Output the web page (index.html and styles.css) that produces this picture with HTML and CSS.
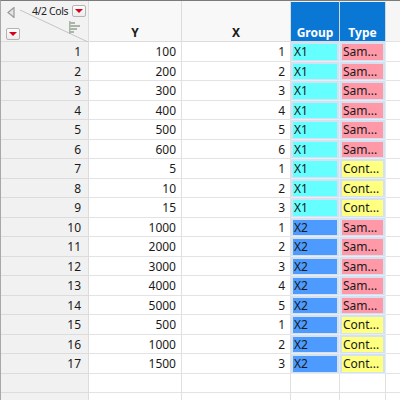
FILE: index.html
```html
<!DOCTYPE html>
<html>
<head>
<meta charset="utf-8">
<link rel="stylesheet" href="styles.css">
</head>
<body>
<div class="sheet">
  <div class="corner">
    <svg class="diag" width="88" height="41" viewBox="0 0 88 41"><line x1="20" y1="9" x2="88" y2="41" stroke="#c4c4c4" stroke-width="1"/></svg>
    <svg class="back" width="8" height="11" viewBox="0 0 8 11"><polygon points="7,0.5 7,10.5 1,5.5" fill="#e4e4e4" stroke="#9a9a9a" stroke-width="1.2"/></svg>
    <span class="cols">4/2 Cols</span>
    <span class="btn btn-top"><i class="tri"></i></span>
    <span class="btn btn-bot"><i class="tri"></i></span>
    <svg class="sorticon" width="12" height="13" viewBox="0 0 12 13">
      <rect x="0" y="0" width="1.5" height="13" fill="#a9b5a6"/>
      <rect x="1" y="1" width="5" height="2" fill="#a9b5a6"/>
      <rect x="1" y="4" width="10" height="2" fill="#a9b5a6"/>
      <rect x="1" y="7" width="7" height="2" fill="#a9b5a6"/>
      <rect x="1" y="10" width="4" height="2" fill="#a9b5a6"/>
    </svg>
  </div>
  <div class="hd">Y</div>
  <div class="hd">X</div>
  <div class="hd sel">Group</div>
  <div class="hd sel">Type</div>
  <div class="hd rest"></div>

  <div class="rh">1</div><div class="num">100</div><div class="num">1</div><div class="sc"><span class="x1">X1</span></div><div class="sc"><span class="sam">Sam...</span></div><div class="rest"></div>
  <div class="rh">2</div><div class="num">200</div><div class="num">2</div><div class="sc"><span class="x1">X1</span></div><div class="sc"><span class="sam">Sam...</span></div><div class="rest"></div>
  <div class="rh">3</div><div class="num">300</div><div class="num">3</div><div class="sc"><span class="x1">X1</span></div><div class="sc"><span class="sam">Sam...</span></div><div class="rest"></div>
  <div class="rh">4</div><div class="num">400</div><div class="num">4</div><div class="sc"><span class="x1">X1</span></div><div class="sc"><span class="sam">Sam...</span></div><div class="rest"></div>
  <div class="rh">5</div><div class="num">500</div><div class="num">5</div><div class="sc"><span class="x1">X1</span></div><div class="sc"><span class="sam">Sam...</span></div><div class="rest"></div>
  <div class="rh">6</div><div class="num">600</div><div class="num">6</div><div class="sc"><span class="x1">X1</span></div><div class="sc"><span class="sam">Sam...</span></div><div class="rest"></div>
  <div class="rh">7</div><div class="num">5</div><div class="num">1</div><div class="sc"><span class="x1">X1</span></div><div class="sc"><span class="cont">Cont...</span></div><div class="rest"></div>
  <div class="rh">8</div><div class="num">10</div><div class="num">2</div><div class="sc"><span class="x1">X1</span></div><div class="sc"><span class="cont">Cont...</span></div><div class="rest"></div>
  <div class="rh">9</div><div class="num">15</div><div class="num">3</div><div class="sc"><span class="x1">X1</span></div><div class="sc"><span class="cont">Cont...</span></div><div class="rest"></div>
  <div class="rh">10</div><div class="num">1000</div><div class="num">1</div><div class="sc"><span class="x2">X2</span></div><div class="sc"><span class="sam">Sam...</span></div><div class="rest"></div>
  <div class="rh">11</div><div class="num">2000</div><div class="num">2</div><div class="sc"><span class="x2">X2</span></div><div class="sc"><span class="sam">Sam...</span></div><div class="rest"></div>
  <div class="rh">12</div><div class="num">3000</div><div class="num">3</div><div class="sc"><span class="x2">X2</span></div><div class="sc"><span class="sam">Sam...</span></div><div class="rest"></div>
  <div class="rh">13</div><div class="num">4000</div><div class="num">4</div><div class="sc"><span class="x2">X2</span></div><div class="sc"><span class="sam">Sam...</span></div><div class="rest"></div>
  <div class="rh">14</div><div class="num">5000</div><div class="num">5</div><div class="sc"><span class="x2">X2</span></div><div class="sc"><span class="sam">Sam...</span></div><div class="rest"></div>
  <div class="rh">15</div><div class="num">500</div><div class="num">1</div><div class="sc"><span class="x2">X2</span></div><div class="sc"><span class="cont">Cont...</span></div><div class="rest"></div>
  <div class="rh">16</div><div class="num">1000</div><div class="num">2</div><div class="sc"><span class="x2">X2</span></div><div class="sc"><span class="cont">Cont...</span></div><div class="rest"></div>
  <div class="rh">17</div><div class="num">1500</div><div class="num">3</div><div class="sc"><span class="x2">X2</span></div><div class="sc"><span class="cont">Cont...</span></div><div class="rest"></div>
  <div class="rh"></div><div class="num"></div><div class="num"></div><div class="num"></div><div class="num"></div><div class="rest"></div>
  <div class="rh"></div><div class="num"></div><div class="num"></div><div class="num"></div><div class="num"></div><div class="rest"></div>
</div>
</body>
</html>
```
FILE: styles.css
```css
html, body { margin: 0; padding: 0; background: #fff; }
body { width: 400px; height: 400px; overflow: hidden; font-family: "Noto Sans", "Open Sans", sans-serif; font-size: 12px; color: #1a1a1a; }
.sheet {
  display: grid;
  grid-template-columns: 88px 93px 109px 49px 46px 1fr;
  grid-template-rows: 41px repeat(19, 19.52px);
  border-top: 1px solid #7b7b7b;
  border-left: 1px solid #a8a8a8;
}
.sheet > div { box-sizing: border-box; border-right: 1px solid #dcdcdc; border-bottom: 1px solid #dcdcdc; }
.corner { position: relative; background: #f2f2f2; }
.diag { position: absolute; left: -1px; top: 0; }
.back { position: absolute; left: 6px; top: 6px; }
.cols { position: absolute; left: 31px; top: 3px; font-size: 10.5px; letter-spacing: -0.4px; color: #222; }
.btn { position: absolute; width: 12px; height: 10px; border: 1px solid #b4b4b4; border-radius: 2px; background: linear-gradient(#fdfdfd, #ececec); }
.btn-top { left: 71px; top: 4px; }
.btn-bot { left: 5px; top: 27px; }
.tri { position: absolute; left: 2px; top: 3px; width: 0; height: 0; border-left: 4px solid transparent; border-right: 4px solid transparent; border-top: 4px solid #d6001c; }
.sorticon { position: absolute; left: 68px; top: 20px; }
.hd { display: flex; align-items: flex-end; justify-content: center; padding-bottom: 0; font-weight: bold; background: #f8f8f8; }
.hd.sel { background: #0b77d5; color: #fff; border-top: 1px solid #f0f0f0; border-right-color: #cbd9e8; }
.hd.rest { background: #f6f6f6; }
.rh { background: #f1f1f1; text-align: right; padding-right: 7px; line-height: 19px; }
.num { text-align: right; padding-right: 5px; line-height: 19px; border-right-color: #e0e0e0 !important; border-bottom-color: #e3e3e3 !important; }
.sc { background: #d3e1f0; padding: 2px 2px 1px 2px; border-right-color: #e4ebf3 !important; border-bottom-color: #e6edf5 !important; }
.sc span { display: block; height: 100%; padding-left: 1px; line-height: 16px; overflow: hidden; white-space: nowrap; }
.x1 { background: #66ffff; }
.x2 { background: #4d9bff; }
.sam { background: #ff99a8; }
.cont { background: #ffff80; }
.rest { background: #fff; border-right: none !important; border-bottom-color: #e3e3e3 !important; }
```
